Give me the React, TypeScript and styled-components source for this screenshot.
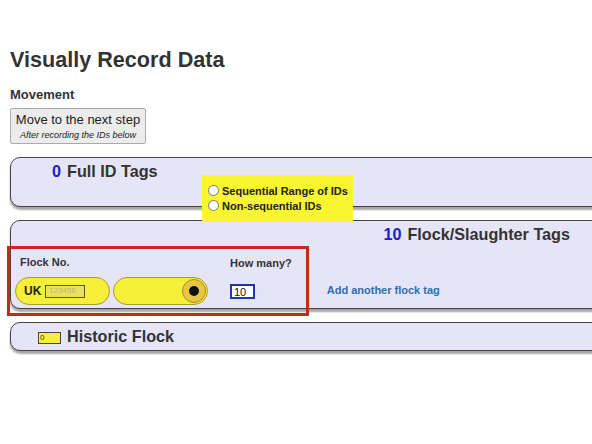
import React from 'react'
import styled, { createGlobalStyle } from 'styled-components'

const GlobalStyle = createGlobalStyle`
    html, body {
        margin: 0;
        padding: 0;
        background: #fff;
        font-family: "Liberation Sans", Arial, sans-serif;
        color: #333;
    }
`

const App = () => {
    return (
        <Page>
            <GlobalStyle />
            <Heading>Visually Record Data</Heading>
            <SectionLabel>Movement</SectionLabel>
            <MoveButton type="button">
                <span>Move to the next step</span>
                <small>After recording the IDs below</small>
            </MoveButton>

            <Panel $height={50}>
                <PanelTitle $indent={41}>
                    <Count>0</Count> Full ID Tags
                </PanelTitle>
                <RadioBox>
                    <RadioRow><Radio type="radio" name="range" /> Sequential Range of IDs</RadioRow>
                    <RadioRow><Radio type="radio" name="range" /> Non-sequential IDs</RadioRow>
                </RadioBox>
            </Panel>

            <Panel $height={89}>
                <PanelTitle $right>
                    <Count>10</Count> Flock/Slaughter Tags
                </PanelTitle>
                <EntryRow>
                    <Highlight>
                        <FlockCol>
                            <FieldLabel>Flock No.</FieldLabel>
                            <Tag>
                                <TagHalf>
                                    <Country>UK</Country>
                                    <FlockNumber>123456</FlockNumber>
                                </TagHalf>
                                <TagHalf $end>
                                    <Eyelet />
                                </TagHalf>
                            </Tag>
                        </FlockCol>
                        <CountCol>
                            <FieldLabel>How many?</FieldLabel>
                            <CountInput defaultValue="10" />
                        </CountCol>
                    </Highlight>
                    <AddLink href="#">Add another flock tag</AddLink>
                </EntryRow>
            </Panel>

            <Panel $height={29}>
                <PanelTitle $indent={27}>
                    <HistoricInput defaultValue="0" /> Historic Flock
                </PanelTitle>
            </Panel>
        </Page>
    )
}

export default App

const Page = styled.div`
    width: 592px;
    height: 444px;
    overflow: hidden;
    padding: 47px 0 0 10px;
    box-sizing: border-box;
`

const Heading = styled.h1`
    margin: 0;
    font-size: 21.6px;
    line-height: 26px;
    font-weight: bold;
    color: #333;
`

const SectionLabel = styled.div`
    margin-top: 14px;
    font-size: 13px;
    line-height: 16px;
    font-weight: bold;
`

const MoveButton = styled.button`
    margin-top: 5px;
    width: 136px;
    height: 36px;
    display: flex;
    flex-direction: column;
    align-items: center;
    justify-content: center;
    gap: 2px;
    padding: 0;
    background: #ececec;
    border: 1px solid #aaa;
    border-radius: 2px;
    font-family: inherit;
    color: #222;
    span {
        font-size: 13px;
        line-height: 16px;
    }
    small {
        font-size: 9px;
        line-height: 11px;
        font-style: italic;
    }
`

const Panel = styled.div<{ $height: number }>`
    position: relative;
    margin-top: 13px;
    width: 650px;
    height: ${props => props.$height}px;
    box-sizing: border-box;
    background: #e5e5f7;
    border: 1.5px solid #444;
    border-radius: 10px;
    box-shadow: 0 3px 2px rgba(0, 0, 0, 0.35);
    padding-top: 3px;
`

const PanelTitle = styled.div<{ $indent?: number; $right?: boolean }>`
    display: flex;
    align-items: center;
    gap: 6px;
    height: 20px;
    font-size: 16.2px;
    font-weight: bold;
    color: #333;
    padding-left: ${props => props.$indent ?? 0}px;
    ${props => props.$right ? 'justify-content: flex-end; padding-right: 89px;' : ''}
`

const Count = styled.span`
    color: #1a22c8;
`

const RadioBox = styled.div`
    position: absolute;
    left: 191px;
    top: 17px;
    width: 151px;
    height: 47px;
    box-sizing: border-box;
    padding: 8px 0 0 6px;
    background: #f9f52e;
    z-index: 2;
`

const RadioRow = styled.label`
    display: flex;
    align-items: center;
    gap: 3px;
    height: 15px;
    font-size: 11px;
    font-weight: bold;
    color: #222;
`

const Radio = styled.input`
    margin: 0;
    width: 11px;
    height: 11px;
`

const EntryRow = styled.div`
    display: flex;
    align-items: flex-end;
    margin-top: 11px;
    padding-left: 4px;
`

const Highlight = styled.div`
    position: relative;
    display: flex;
    align-items: flex-end;
    gap: 22px;
    &::after {
        content: '';
        position: absolute;
        top: -9px;
        left: -8px;
        right: -17px;
        bottom: -11px;
        border: 3px solid #c3291c;
        pointer-events: none;
    }
`

const FlockCol = styled.div`
    display: flex;
    flex-direction: column;
    gap: 8px;
`

const CountCol = styled.div`
    display: flex;
    flex-direction: column;
    gap: 14px;
    padding-bottom: 6px;
`

const FieldLabel = styled.div`
    font-size: 11px;
    line-height: 14px;
    font-weight: bold;
    color: #333;
    padding-left: 5px;
    ${CountCol} & {
        padding-left: 0;
    }
`

const Tag = styled.div`
    display: flex;
    gap: 3px;
`

const TagHalf = styled.div<{ $end?: boolean }>`
    width: 95px;
    height: 28px;
    box-sizing: border-box;
    display: flex;
    align-items: center;
    justify-content: ${props => props.$end ? 'flex-end' : 'flex-start'};
    gap: 4px;
    padding: 0 ${props => props.$end ? '1px' : '0'} 0 8px;
    background: #f6ef3a;
    border: 1.5px solid #ab9a36;
    border-radius: 14px;
`

const Country = styled.span`
    font-size: 12px;
    font-weight: bold;
    color: #222;
`

const FlockNumber = styled.span`
    width: 40px;
    height: 13px;
    box-sizing: border-box;
    padding-left: 3px;
    border: 1.5px solid #5a5520;
    background: #eae25a;
    font-size: 8px;
    line-height: 10px;
    color: #b9b47a;
    filter: blur(0.7px);
`

const Eyelet = styled.span`
    width: 24px;
    height: 24px;
    box-sizing: border-box;
    border-radius: 50%;
    background: #e9c544;
    border: 1.5px solid #a58c2c;
    display: flex;
    align-items: center;
    justify-content: center;
    &::after {
        content: '';
        width: 10px;
        height: 10px;
        border-radius: 50%;
        background: #111;
    }
`

const CountInput = styled.input`
    width: 25px;
    height: 15px;
    box-sizing: border-box;
    padding: 0 2px;
    border: 2px solid #1c36b8;
    background: #fff;
    font-family: inherit;
    font-size: 11px;
    color: #111;
`

const AddLink = styled.a`
    margin-left: 35px;
    padding-bottom: 9px;
    font-size: 11px;
    font-weight: bold;
    color: #2c6eb2;
    text-decoration: none;
`

const HistoricInput = styled.input`
    width: 23px;
    height: 12px;
    box-sizing: border-box;
    padding: 0 1px;
    margin-top: 3px;
    border: 1px solid #444;
    background: #f6f03a;
    font-family: inherit;
    font-size: 8px;
    color: #333;
`
